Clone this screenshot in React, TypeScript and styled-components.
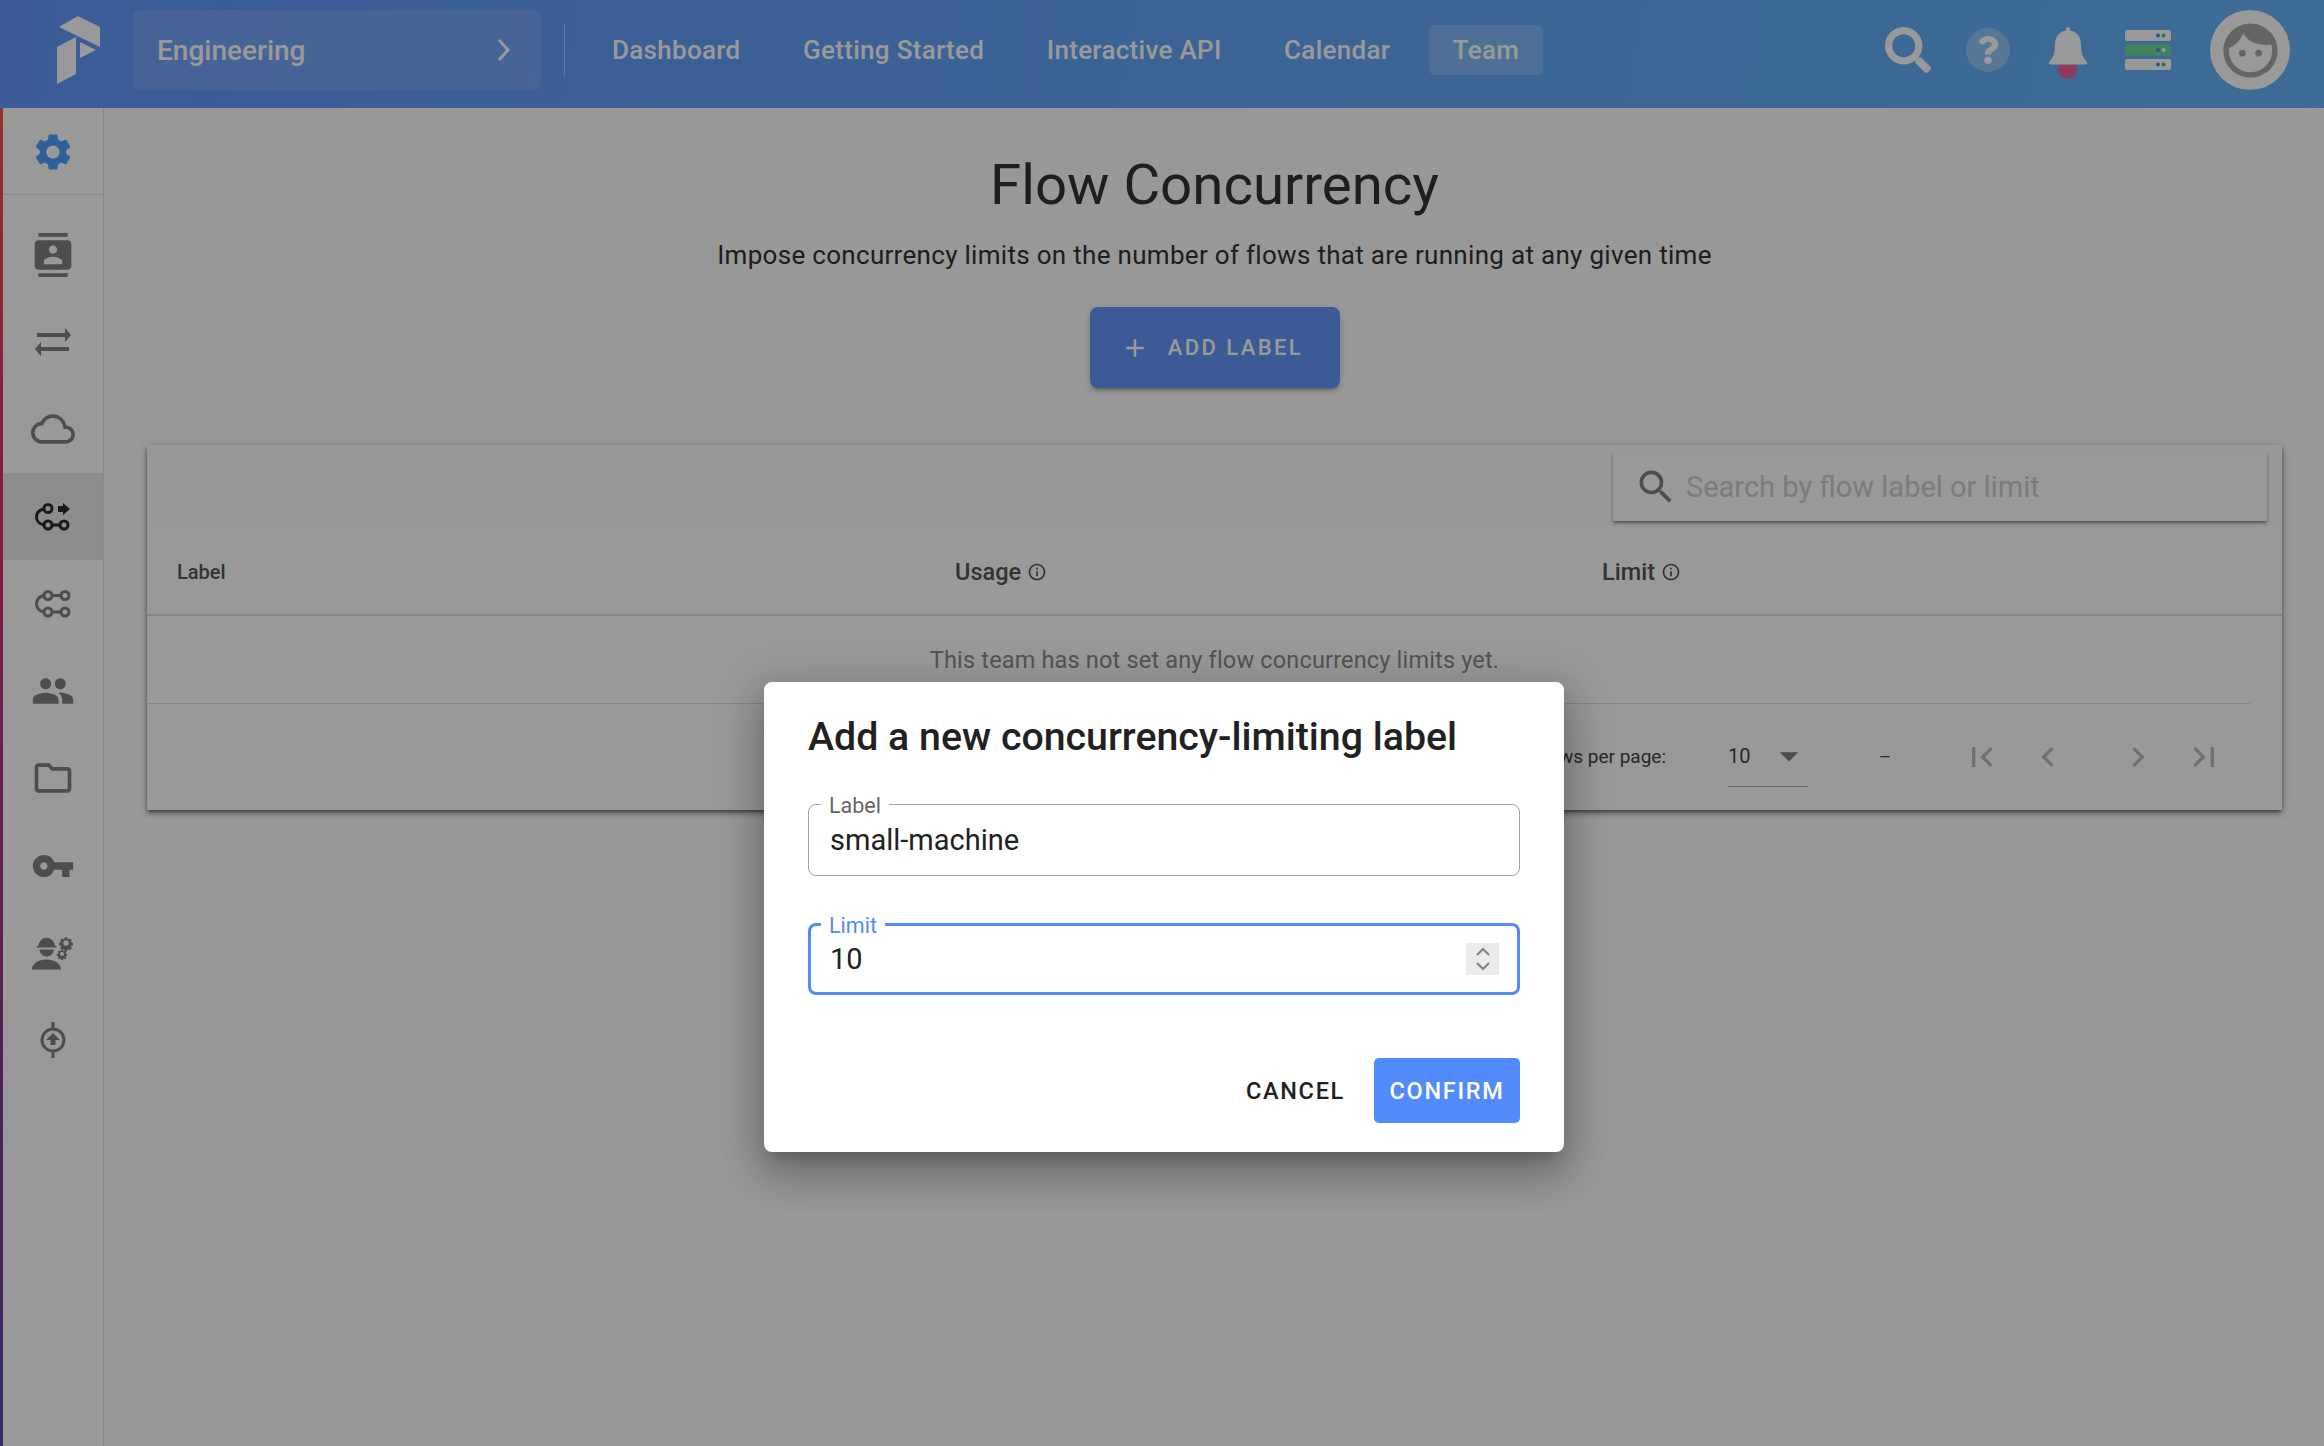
import React from "react";
import styled, { createGlobalStyle } from "styled-components";
import {
  MdSettings, MdContacts, MdOutlineCloud, MdPeople, MdOutlineFolder, MdVpnKey, MdFace, MdAdd,
  MdOutlineInfo, MdSearch, MdKeyboardArrowLeft, MdKeyboardArrowRight, MdFirstPage, MdLastPage, MdArrowDropDown,
} from "react-icons/md";
import { FaSearch, FaQuestion } from "react-icons/fa";

const Global = createGlobalStyle`
  html, body { margin: 0; padding: 0; background: #fdfdfd; }
  body { font-family: Roboto, "Liberation Sans", sans-serif; color: #212121; overflow: hidden; }
  * { box-sizing: border-box; }
`;

const Page = styled.div`
  position: relative;
  width: 2324px;
  height: 1446px;
  overflow: hidden;
  display: flex;
  flex-direction: column;
`;

const Header = styled.header`
  height: 108px;
  flex: none;
  display: flex;
  align-items: center;
  padding: 0 0 8px 3px;
  background: linear-gradient(100deg, #6298fc 0%, #64a8fa 60%, #66b4fa 100%);
  color: #fff;
`;
const LogoBox = styled.div`
  width: 130px;
  padding-left: 54px;
  display: flex;
`;
const OrgSelect = styled.div`
  width: 408px;
  height: 80px;
  border-radius: 8px;
  background: rgba(255, 255, 255, 0.12);
  display: flex;
  align-items: center;
  justify-content: space-between;
  padding: 0 30px 0 24px;
  font-size: 28px;
  font-weight: 500;
`;
const Sep = styled.div`
  width: 1px;
  height: 51px;
  margin: 0 23px;
  background: rgba(255, 255, 255, 0.45);
`;
const Nav = styled.nav`
  display: flex;
  align-items: center;
  gap: 14.5px;
`;
const NavItem = styled.div<{ $active?: boolean }>`
  height: 50px;
  padding: 0 24px;
  display: flex;
  align-items: center;
  border-radius: 6px;
  font-size: 26px;
  font-weight: 500;
  letter-spacing: 0.3px;
  background: ${(p) => (p.$active ? "rgba(255,255,255,0.2)" : "transparent")};
`;
const HeaderRight = styled.div`
  margin-left: auto;
  display: flex;
  align-items: center;
  padding-right: 34px;
`;
const HeaderIcon = styled.div`
  width: 80px;
  height: 80px;
  display: flex;
  align-items: center;
  justify-content: center;
  position: relative;
`;
const HelpCircle = styled.div`
  width: 44px;
  height: 44px;
  border-radius: 50%;
  background: rgba(255, 255, 255, 0.3);
  display: flex;
  align-items: center;
  justify-content: center;
`;
const BellDot = styled.span`
  position: absolute;
  left: 30px;
  top: 50px;
  width: 19px;
  height: 19px;
  border-radius: 50%;
  background: #ee629c;
`;
const BellWrap = styled.div`
  position: relative;
  display: flex;
  margin-top: -4px;
`;
const Avatar = styled.div`
  width: 80px;
  height: 80px;
  margin-left: 22px;
  border-radius: 50%;
  background: #fff;
  display: flex;
  align-items: center;
  justify-content: center;
  color: #a9a9a9;
`;

const Body = styled.div`
  flex: 1;
  display: flex;
  min-height: 0;
`;
const Sidebar = styled.aside`
  width: 104px;
  flex: none;
  border-left: 3px solid transparent;
  border-image: linear-gradient(180deg, #f0584a 0%, #e02a6a 25%, #8a3a90 70%, #5a4aa8 100%) 1;
  background: #fff;
  position: relative;
  display: flex;
  flex-direction: column;
  color: #808080;
`;
const SideEdge = styled.div`
  position: absolute;
  top: 0;
  bottom: 0;
  right: 0;
  width: 1px;
  background: #e4e4e4;
`;
const SideTop = styled.div`
  height: 87px;
  flex: none;
  margin-bottom: 16px;
  display: flex;
  align-items: center;
  justify-content: center;
  border-bottom: 1px solid #e4e4e4;
  color: #4aa0fc;
  padding: 1px 2px 0 0;
`;
const SideItem = styled.div<{ $active?: boolean }>`
  height: 87.3px;
  flex: none;
  display: flex;
  align-items: center;
  justify-content: center;
  padding-right: 2px;
  background: ${(p) => (p.$active ? "#eaeaea" : "transparent")};
  color: ${(p) => (p.$active ? "#2b2b2b" : "#808080")};
`;

const Main = styled.main`
  flex: 1;
  min-width: 0;
  padding: 0 42px 0 43px;
  display: flex;
  flex-direction: column;
  align-items: center;
`;
const Title = styled.h1`
  margin: 44px 0 0;
  height: 66px;
  line-height: 66px;
  font-size: 56.4px;
  font-weight: 400;
  color: #333;
`;
const Subtitle = styled.p`
  margin: 21px 0 0;
  height: 32px;
  line-height: 32px;
  font-size: 26px;
  letter-spacing: 0.3px;
  color: #333;
`;
const AddButton = styled.button`
  margin-top: 36px;
  width: 250px;
  height: 81px;
  border: 0;
  border-radius: 8px;
  padding: 0 6px 0 0;
  background: #6496fa;
  color: #fff;
  font: 500 22px Roboto, sans-serif;
  letter-spacing: 2.4px;
  display: flex;
  align-items: center;
  justify-content: center;
  gap: 18px;
  box-shadow: 0 3px 3px -2px rgba(0, 0, 0, 0.3), 0 3px 6px rgba(0, 0, 0, 0.2);
`;
const Card = styled.section`
  margin-top: 57px;
  width: 100%;
  height: 365px;
  flex: none;
  background: #fff;
  box-shadow: 0 2px 4px -1px rgba(0, 0, 0, 0.5), 0 4px 5px rgba(0, 0, 0, 0.25), 0 1px 10px rgba(0, 0, 0, 0.12);
  display: flex;
  flex-direction: column;
`;
const Toolbar = styled.div`
  height: 84px;
  flex: none;
  display: flex;
  justify-content: flex-end;
  padding: 7px 15px 0 0;
  background: #fdfdfd;
`;
const SearchBox = styled.div`
  width: 654px;
  height: 69px;
  background: #fff;
  display: flex;
  align-items: center;
  padding-left: 21px;
  gap: 8px;
  color: #808080;
  font-size: 29px;
  box-shadow: 0 2px 3px -1px rgba(0, 0, 0, 0.5), 0 2px 4px rgba(0, 0, 0, 0.2);
`;
const Placeholder = styled.span`
  color: #cfcfcf;
`;
const HeadRow = styled.div`
  height: 87px;
  flex: none;
  display: flex;
  align-items: center;
  border-bottom: 2px solid #dedede;
  font-weight: 500;
  color: #555;
`;
const HeadCell = styled.div<{ $w: number; $size: number; $inset?: number }>`
  width: ${(p) => p.$w}px;
  padding-left: ${(p) => p.$inset ?? 0}px;
  font-size: ${(p) => p.$size}px;
  display: flex;
  align-items: center;
  gap: 6px;
`;
const EmptyRow = styled.div`
  height: 87px;
  flex: none;
  display: flex;
  align-items: center;
  justify-content: center;
  font-size: 23.5px;
  letter-spacing: 0.17px;
  color: #8c8c8c;
`;
const FooterLine = styled.div`
  height: 1px;
  flex: none;
  margin-right: 32px;
  background: #dedede;
`;
const Footer = styled.div`
  flex: 1;
  display: flex;
  align-items: center;
  justify-content: flex-end;
  padding-right: 58px;
  padding-bottom: 1px;
  font-size: 19px;
  color: #444;
`;
const SelectBox = styled.div`
  width: 80px;
  height: 60px;
  margin-left: 62px;
  display: flex;
  align-items: center;
  justify-content: space-between;
  border-bottom: 1px solid #aaa;
  font-size: 20px;
  color: #444;
`;
const CaretBox = styled.span`
  display: flex;
  margin-right: -3px;
  color: #808080;
`;
const Dash = styled.span`
  width: 154px;
  text-align: center;
`;
const PagerIcons = styled.div`
  display: flex;
  align-items: center;
  color: #bcbcbc;
`;
const PagerIcon = styled.span<{ $gap?: number }>`
  display: flex;
  margin-left: ${(p) => p.$gap ?? 0}px;
`;

const Overlay = styled.div`
  position: absolute;
  inset: 0;
  background: rgba(0, 0, 0, 0.4);
  padding: 682px 0 0 764px;
`;
const Dialog = styled.div`
  width: 800px;
  height: 470px;
  padding: 0 44px;
  background: #fff;
  border-radius: 8px;
  box-shadow: 0 11px 15px -7px rgba(0, 0, 0, 0.2), 0 24px 38px 3px rgba(0, 0, 0, 0.16), 0 9px 46px 8px rgba(0, 0, 0, 0.16);
  display: flex;
  flex-direction: column;
`;
const DialogTitle = styled.h2`
  margin: 30px 0 0;
  height: 50px;
  line-height: 50px;
  font-size: 39.3px;
  font-weight: 500;
  color: #212121;
`;
const Field = styled.div<{ $focused?: boolean; $top: number }>`
  position: relative;
  margin-top: ${(p) => p.$top}px;
  height: 72px;
  border: ${(p) => (p.$focused ? "3px solid #528bfb" : "1px solid #a3a3a3")};
  border-radius: 8px;
  display: flex;
  align-items: center;
  padding: ${(p) => (p.$focused ? "0 18px 0 19px" : "0 21px")};
  justify-content: space-between;
  font-size: 29px;
  color: #212121;
`;
const Legend = styled.span<{ $focused?: boolean }>`
  position: absolute;
  left: ${(p) => (p.$focused ? "10px" : "12px")};
  top: ${(p) => (p.$focused ? "-11px" : "-10px")};
  padding: 0 8px;
  background: #fff;
  line-height: 22px;
  font-size: 21.5px;
  color: ${(p) => (p.$focused ? "#528bfb" : "#666")};
`;
const Spinner = styled.div`
  width: 33px;
  height: 32px;
  background: #ebebeb;
  color: #808080;
  display: flex;
  align-items: center;
  justify-content: center;
`;
const Actions = styled.div`
  margin-top: 63px;
  display: flex;
  justify-content: flex-end;
  align-items: center;
  gap: 29px;
`;
const ActionButton = styled.button<{ $primary?: boolean }>`
  height: 65px;
  width: ${(p) => (p.$primary ? "146px" : "auto")};
  border: 0;
  padding: 0;
  border-radius: 5px;
  font: 500 23.5px Roboto, sans-serif;
  letter-spacing: 1.7px;
  background: ${(p) => (p.$primary ? "#528bfb" : "transparent")};
  color: ${(p) => (p.$primary ? "#fff" : "#212121")};
`;

const Logo = () => (
  <svg width="43" height="68" viewBox="57 16 43 68" fill="#fff">
    <polygon points="59,27 78,16 100,27 100,47" />
    <polygon points="57,47 76,37 76,74 57,84" />
    <polygon points="80,42 96,50 80,58" />
  </svg>
);

const OrgChevron = () => (
  <svg width="14" height="22" viewBox="0 0 14 22" fill="none" stroke="currentColor" strokeWidth="3">
    <path d="M2 1l9 10-9 10" />
  </svg>
);

const SwapIcon = () => (
  <svg width="36" height="28" viewBox="0 0 36 28" fill="currentColor">
    <path d="M2 5h28V0l6 7-6 7V9H2z" />
    <path d="M34 19H6v-5L0 21l6 7v-5h28z" />
  </svg>
);

const FlowIcon = ({ run }: { run?: boolean }) => (
  <svg width="36" height="28" viewBox="0 0 36 28" fill="none" stroke="currentColor" strokeWidth="3">
    {run ? (
      <>
        <circle cx="13" cy="5.5" r="4" />
        <circle cx="13" cy="22" r="4" />
        <circle cx="29" cy="22" r="4" />
        <path d="M9.5 5.5C4 7 1.5 10 1.5 14c0 4 3 7.5 8 8M17 22h8" />
        <path d="M23 3h5V0l7 6-7 6V9h-5z" fill="currentColor" stroke="none" />
      </>
    ) : (
      <>
        <circle cx="13" cy="5.5" r="4" />
        <circle cx="30" cy="5.5" r="4" />
        <circle cx="13" cy="22" r="4" />
        <circle cx="30" cy="22" r="4" />
        <path d="M9 5.5C4 6.5 1.5 10 1.5 14c0 4 3 7.5 7.5 8M17 5.5h9M17 22h9" />
      </>
    )}
  </svg>
);

const BellIcon = () => (
  <svg width="40" height="46" viewBox="0 0 40 46" fill="currentColor">
    <path d="M18 4a2 2 0 0 1 4 0v1.5c6.5 1 11 6 11 14 0 9 2 13 6 17.5 1 1.5 0 2.5-1.5 2.5h-35C1 39.5 0 38.5 1 37c4-4.5 6-8.5 6-17.5 0-8 4.5-13 11-14z" />
  </svg>
);

const gear = "M-1.5-7.5h3l.5 2 1.5.6 1.8-1 2.1 2.1-1 1.8.6 1.5 2 .5v3l-2 .5-.6 1.5 1 1.8-2.1 2.1-1.8-1-1.5.6-.5 2h-3l-.5-2-1.5-.6-1.8 1-2.1-2.1 1-1.8-.6-1.5-2-.5v-3l2-.5.6-1.5-1-1.8 2.1-2.1 1.8 1 1.5-.6z";

const EngineerIcon = () => (
  <svg width="42" height="33" viewBox="0 0 42 33" fill="currentColor">
    <path d="M6.5 9a8.2 8.2 0 0 1 16.4 0h1.5v1.5H5V9zM7.5 12.5h14.4a7.2 7.2 0 0 1-14.4 0zM0 32.500c0-6 6.5-10 14.500-10s14.500 4 14.500 10z" />
    <g transform="translate(34 6) scale(.78)"><path d={gear} /><circle r="3.500" fill="#fff" /></g>
    <g transform="translate(30 17) scale(.58)"><path d={gear} /><circle r="3.500" fill="#fff" /></g>
  </svg>
);

const AgentIcon = () => (
  <svg width="26" height="36" viewBox="0 0 26 36" fill="none" stroke="currentColor" strokeWidth="3">
    <circle cx="13" cy="18" r="11" />
    <path d="M13 0v7M13 29v7" />
    <path d="M13 11l7 7h-4.5v5h-5v-5H6z" fill="currentColor" stroke="none" />
  </svg>
);

const ServerIcon = () => (
  <svg width="46" height="40" viewBox="0 0 46 40">
    <rect y="0" width="46" height="11" rx="2" fill="#fff" />
    <rect y="14.5" width="46" height="11" rx="2" fill="#6fdc9c" />
    <rect y="29" width="46" height="11" rx="2" fill="#fff" />
    <circle cx="33" cy="5.5" r="2" fill="#4a90e2" /><circle cx="38.5" cy="5.5" r="2" fill="#3cc47c" />
    <circle cx="33" cy="20" r="2" fill="#4a90e2" /><circle cx="38.5" cy="20" r="2" fill="#fff" />
    <circle cx="33" cy="34.5" r="2" fill="#4a90e2" /><circle cx="38.5" cy="34.5" r="2" fill="#3cc47c" />
  </svg>
);

const SpinnerArrows = () => (
  <svg width="16" height="26" viewBox="0 0 16 26" fill="none" stroke="currentColor" strokeWidth="2">
    <path d="M2 9l6-6 6 6M2 17l6 6 6-6" />
  </svg>
);

export default function App() {
  return (
    <Page>
      <Global />
      <Header>
        <LogoBox><Logo /></LogoBox>
        <OrgSelect>Engineering<OrgChevron /></OrgSelect>
        <Sep />
        <Nav>
          <NavItem>Dashboard</NavItem>
          <NavItem>Getting Started</NavItem>
          <NavItem>Interactive API</NavItem>
          <NavItem>Calendar</NavItem>
          <NavItem $active>Team</NavItem>
        </Nav>
        <HeaderRight>
          <HeaderIcon><FaSearch size={46} /></HeaderIcon>
          <HeaderIcon><HelpCircle><FaQuestion size={28} /></HelpCircle></HeaderIcon>
          <HeaderIcon><BellDot /><BellWrap><BellIcon /></BellWrap></HeaderIcon>
          <HeaderIcon><ServerIcon /></HeaderIcon>
          <Avatar><MdFace size={65} /></Avatar>
        </HeaderRight>
      </Header>
      <Body>
        <Sidebar>
          <SideEdge />
          <SideTop><MdSettings size={44} /></SideTop>
          <SideItem><MdContacts size={44} /></SideItem>
          <SideItem><SwapIcon /></SideItem>
          <SideItem><MdOutlineCloud size={44} /></SideItem>
          <SideItem $active><FlowIcon run /></SideItem>
          <SideItem><FlowIcon /></SideItem>
          <SideItem><MdPeople size={44} /></SideItem>
          <SideItem><MdOutlineFolder size={44} /></SideItem>
          <SideItem><MdVpnKey size={44} /></SideItem>
          <SideItem><EngineerIcon /></SideItem>
          <SideItem><AgentIcon /></SideItem>
        </Sidebar>
        <Main>
          <Title>Flow Concurrency</Title>
          <Subtitle>Impose concurrency limits on the number of flows that are running at any given time</Subtitle>
          <AddButton><MdAdd size={30} />ADD LABEL</AddButton>
          <Card>
            <Toolbar>
              <SearchBox>
                <MdSearch size={44} />
                <Placeholder>Search by flow label or limit</Placeholder>
              </SearchBox>
            </Toolbar>
            <HeadRow>
              <HeadCell $w={808} $size={20} $inset={30}>Label</HeadCell>
              <HeadCell $w={647} $size={23.5}>Usage <MdOutlineInfo size={20} /></HeadCell>
              <HeadCell $w={300} $size={23.5}>Limit <MdOutlineInfo size={20} /></HeadCell>
            </HeadRow>
            <EmptyRow>This team has not set any flow concurrency limits yet.</EmptyRow>
            <FooterLine />
            <Footer>
              <span>Rows per page:</span>
              <SelectBox>10<CaretBox><MdArrowDropDown size={44} /></CaretBox></SelectBox>
              <Dash>–</Dash>
              <PagerIcons>
                <PagerIcon><MdFirstPage size={40} /></PagerIcon>
                <PagerIcon $gap={26}><MdKeyboardArrowLeft size={40} /></PagerIcon>
                <PagerIcon $gap={50}><MdKeyboardArrowRight size={40} /></PagerIcon>
                <PagerIcon $gap={26}><MdLastPage size={40} /></PagerIcon>
              </PagerIcons>
            </Footer>
          </Card>
        </Main>
      </Body>
      <Overlay>
        <Dialog>
          <DialogTitle>Add a new concurrency-limiting label</DialogTitle>
          <Field $top={42}>
            <Legend>Label</Legend>
            small-machine
          </Field>
          <Field $top={47} $focused>
            <Legend $focused>Limit</Legend>
            10
            <Spinner><SpinnerArrows /></Spinner>
          </Field>
          <Actions>
            <ActionButton>CANCEL</ActionButton>
            <ActionButton $primary>CONFIRM</ActionButton>
          </Actions>
        </Dialog>
      </Overlay>
    </Page>
  );
}
